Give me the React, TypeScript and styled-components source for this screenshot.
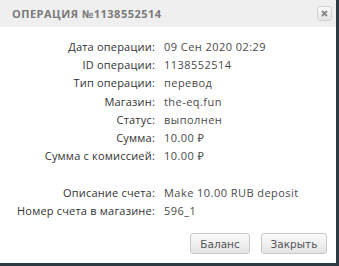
import React from "react";
import styled, { createGlobalStyle } from "styled-components";

const Global = createGlobalStyle`
  html, body { margin: 0; padding: 0; background: #2c3a41; }
  body { width: 339px; height: 266px; overflow: hidden; }
`;

const Dialog = styled.div`
  width: 336px;
  height: 263px;
  background: #fff;
  display: flex;
  flex-direction: column;
  font-family: "Open Sans", "Noto Sans", sans-serif;
`;

const Header = styled.div`
  height: 27px;
  background: #efefef;
  display: flex;
  align-items: center;
  justify-content: space-between;
  padding: 0 4px 0 12px;
`;

const Title = styled.div`
  font-size: 11px;
  font-weight: 700;
  color: #7a7a7a;
  letter-spacing: 0.5px;
`;

const Close = styled.div`
  width: 13px;
  height: 13px;
  border: 1px solid #d0d0d0;
  border-radius: 3px;
  background: linear-gradient(#fafafa, #e6e6e6);
  display: flex;
  align-items: center;
  justify-content: center;
`;

const Grid = styled.div`
  display: grid;
  grid-template-columns: 155px 1fr;
  column-gap: 9px;
  padding-top: 11px;
  font-size: 11px;
  line-height: 18.2px;
`;

const Label = styled.div`
  text-align: right;
  color: #333;
  white-space: nowrap;
  letter-spacing: 0.2px;
`;

const Value = styled.div`
  color: #4a4a4a;
  white-space: nowrap;
  letter-spacing: 0.45px;
`;

const Footer = styled.div`
  margin-top: auto;
  display: flex;
  justify-content: flex-end;
  gap: 11px;
  padding: 0 9px 9px 0;
`;

const Button = styled.button<{ $w: number }>`
  width: ${(p) => p.$w}px;
  height: 21px;
  border: 1px solid #c8c8c8;
  border-radius: 3px;
  background: linear-gradient(#fbfbfb, #e4e4e4);
  font-family: "DejaVu Sans", sans-serif;
  font-size: 10.5px;
  color: #555;
  padding: 0;
`;

const rows: [string, string][] = [
  ["Дата операции:", "09 Сен 2020 02:29"],
  ["ID операции:", "1138552514"],
  ["Тип операции:", "перевод"],
  ["Магазин:", "the-eq.fun"],
  ["Статус:", "выполнен"],
  ["Сумма:", "10.00 ₽"],
  ["Сумма с комиссией:", "10.00 ₽"],
  ["", ""],
  ["Описание счета:", "Make 10.00 RUB deposit"],
  ["Номер счета в магазине:", "596_1"],
];

export default function App() {
  return (
    <>
      <Global />
      <Dialog>
        <Header>
          <Title>ОПЕРАЦИЯ №1138552514</Title>
          <Close>
            <svg width="7" height="7" viewBox="0 0 7 7">
              <path d="M1 1L6 6M6 1L1 6" stroke="#888" strokeWidth="1.8" />
            </svg>
          </Close>
        </Header>
        <Grid>
          {rows.map(([l, v], i) => (
            <React.Fragment key={i}>
              <Label>{l || "\u00a0"}</Label>
              <Value>{v || "\u00a0"}</Value>
            </React.Fragment>
          ))}
        </Grid>
        <Footer>
          <Button $w={60}>Баланс</Button>
          <Button $w={66}>Закрыть</Button>
        </Footer>
      </Dialog>
    </>
  );
}
